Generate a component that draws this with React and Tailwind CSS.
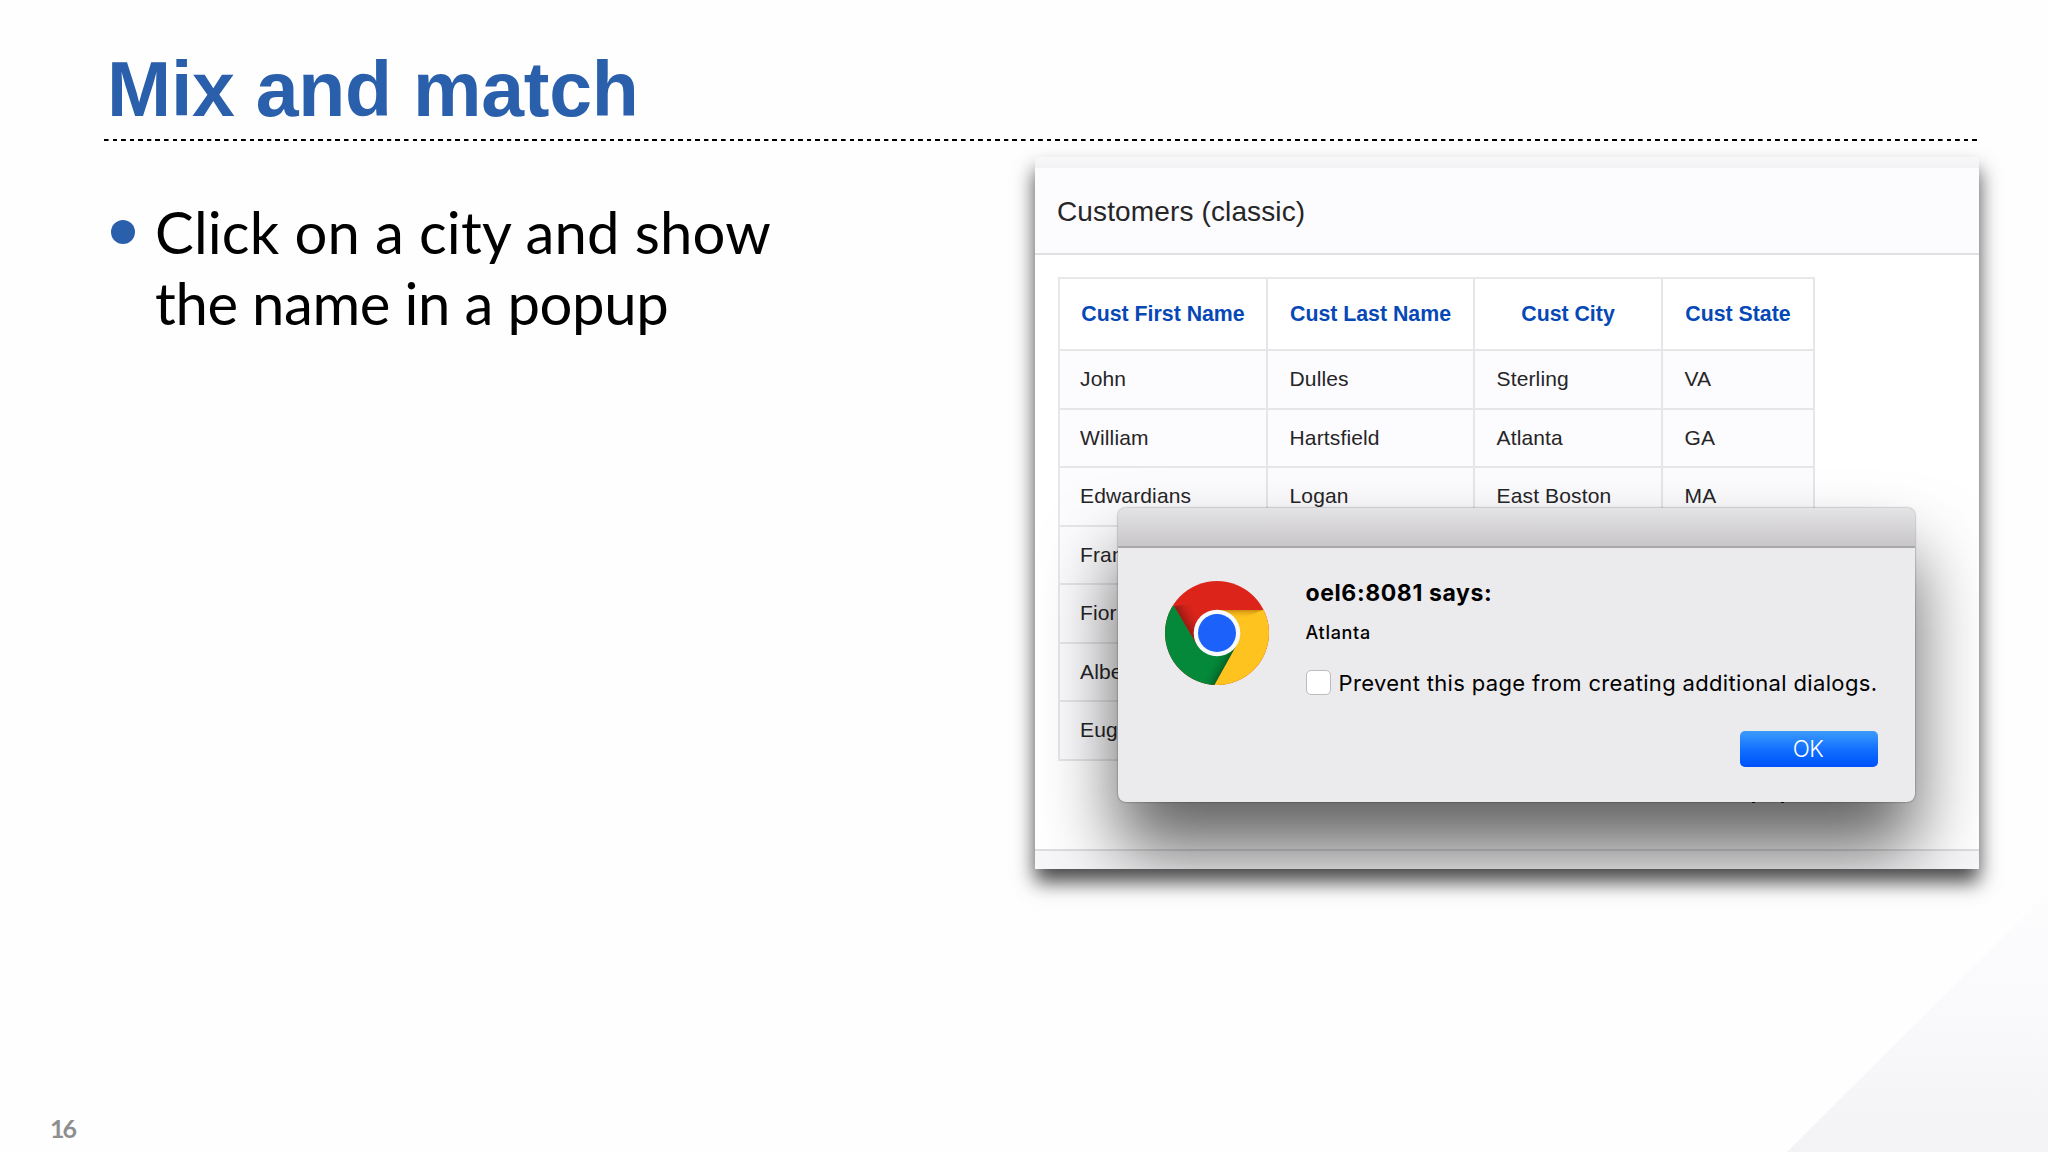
const customers = [
  { first: 'John', last: 'Dulles', city: 'Sterling', state: 'VA' },
  { first: 'William', last: 'Hartsfield', city: 'Atlanta', state: 'GA' },
  { first: 'Edwardians', last: 'Logan', city: 'East Boston', state: 'MA' },
  { first: 'Fran', last: '', city: '', state: '' },
  { first: 'Fior', last: '', city: '', state: '' },
  { first: 'Albe', last: '', city: '', state: '' },
  { first: 'Eug', last: '', city: '', state: '' },
];

const columns = [
  { key: 'first', label: 'Cust First Name' },
  { key: 'last', label: 'Cust Last Name' },
  { key: 'city', label: 'Cust City' },
  { key: 'state', label: 'Cust State' },
];

function ChromeLogo() {
  return (
    <svg viewBox="-52 -52 104 104" className="w-[104px] h-[104px] shrink-0">
      <defs>
        <clipPath id="disc">
          <circle r="52" />
        </clipPath>
        <linearGradient id="redShade" gradientUnits="userSpaceOnUse" x1="-32" y1="-8" x2="-16" y2="-17">
          <stop offset="0" stopColor="#7e170f" stopOpacity="0.75" />
          <stop offset="1" stopColor="#dc241b" stopOpacity="0" />
        </linearGradient>
        <linearGradient id="yellowShade" x1="0" y1="0" x2="0" y2="1">
          <stop offset="0" stopColor="#b5780b" stopOpacity="0.7" />
          <stop offset="1" stopColor="#ffc31f" stopOpacity="0" />
        </linearGradient>
        <linearGradient id="greenShade" gradientUnits="userSpaceOnUse" x1="9" y1="33" x2="-4" y2="26">
          <stop offset="0" stopColor="#04501f" stopOpacity="0.75" />
          <stop offset="1" stopColor="#04883a" stopOpacity="0" />
        </linearGradient>
      </defs>
      <g clipPath="url(#disc)">
        <rect x="-52" y="-52" width="104" height="104" fill="#dc241b" />
        <path d="M-43 -27 L-20 12 L0 0 L-10 -30Z" fill="url(#redShade)" />
        <path d="M-43 -27 L-20 12 L0 23 L20 11.500 L-2.500 52 L-60 60 V-27Z" fill="#04883a" />
        <path d="M20 11.500 L-2.500 52 L-24 52 L0 20Z" fill="url(#greenShade)" />
        <path d="M0 -23 H52 V60 H-7 L20 11.500Z" fill="#ffc31f" />
        <path d="M0 -23 H46 L24 -14 L0 -14Z" fill="url(#yellowShade)" />
      </g>
      <circle r="23.300" fill="#f7f9fb" />
      <circle r="19" fill="#1c62fa" />
    </svg>
  );
}

function CustomerTable() {
  return (
    <div className="mt-[22px] ml-[23px] w-[757px] border-t-2 border-l-2 border-[#e8e7ea] text-[21px] tracking-[0.150px] text-[#262527]">
      <div className="grid grid-cols-[208px_207px_188px_152px] h-[72px]">
        {columns.map((col) => (
          <div
            key={col.key}
            className="flex items-center justify-center border-r-2 border-b-2 border-[#e6e5e8] pt-px text-[21.300px] tracking-normal font-bold text-[#0648b5]">
            {col.label}
          </div>
        ))}
      </div>
      {customers.map((row) => (
        <div
          key={row.first}
          className="grid grid-cols-[208px_207px_188px_152px] h-[58.500px] bg-[#fcfbfd]">
          {columns.map((col) => (
            <div
              key={col.key}
              className="flex items-center border-r-2 border-b-2 border-[#e6e5e8] pb-px pl-5 not-first:pl-[21.500px]">
              {row[col.key]}
            </div>
          ))}
        </div>
      ))}
    </div>
  );
}

function AlertDialog() {
  return (
    <div className="absolute left-[82.500px] top-[351px] w-[797px] h-[294px] rounded-[8px] bg-[#ebeaec] shadow-[0_48px_72px_rgba(0,0,0,0.62),0_0_2px_rgba(0,0,0,0.55)] font-[Inter,sans-serif] text-black">
      <div className="h-[40px] rounded-t-[8px] border-b-2 border-[#aaa8ab] bg-gradient-to-b from-[#e4e3e5] to-[#c8c6c9]" />
      <div className="flex pl-[47px] pt-[33px]">
        <ChromeLogo />
        <div className="ml-[37px] w-[572px]">
          <div className="-mt-[2px] text-[23px] leading-7 font-bold tracking-[0.600px] whitespace-nowrap">
            oel6:8081 says:
          </div>
          <div className="mt-[14px] text-[18px] leading-6 font-medium tracking-[0.700px]">Atlanta</div>
          <div className="mt-[25px] flex items-center gap-[8px]">
            <span className="w-[25px] h-[25px] shrink-0 rounded-[5px] border border-[#bcbbbe] bg-white" />
            <span className="text-[22px] leading-6 tracking-[0.340px] whitespace-nowrap">
              Prevent this page from creating additional dialogs.
            </span>
          </div>
          <button className="mt-[36px] ml-[434.500px] block w-[138px] h-[36px] rounded-[5px] bg-gradient-to-b from-[#3d9bfb] via-[#1470ff] to-[#0050fb] pr-[2px] text-[22.500px] leading-9 font-light tracking-[-0.500px] text-white">
            OK
          </button>
        </div>
      </div>
    </div>
  );
}

function CustomersRegion() {
  return (
    <section className="w-[944px] h-[712px] shadow-[0_13px_19px_rgba(0,0,0,0.72)]">
      <div className="relative h-full overflow-hidden bg-white">
        <div className="h-[11px] bg-gradient-to-b from-[#f8f7f9] to-[#f2f1f3]" />
        <div className="flex h-[87px] items-center border-b-2 border-[#e0dfe2] bg-[#fcfbfd] pt-[2px] pl-[22px] text-[28px] tracking-[0.130px] text-[#262527]">
          Customers (classic)
        </div>
        <CustomerTable />
        <div className="mt-[40.500px] mr-[195px] flex justify-end gap-[26px]">
          <span className="w-[3px] h-[2px] bg-[#1d1c1e]" />
          <span className="w-[3px] h-[2px] bg-[#1d1c1e]" />
        </div>
        <div className="mt-[46px] h-[20px] border-t-2 border-[#dddcdf] bg-[#f7f6f8]" />
        <AlertDialog />
      </div>
    </section>
  );
}

export default function App() {
  return (
    <div className="relative w-[2048px] h-[1152px] overflow-hidden bg-[#fefefe] font-['Liberation_Sans',Arial,sans-serif]">
      {/* Folded corner */}
      <div className="absolute right-0 bottom-0 w-[261px] h-[260px] bg-gradient-to-b from-[#fdfdfe] via-[#f9f8fb] to-[#f3f2f5] [clip-path:polygon(100%_0,100%_100%,0_100%)]" />

      <div className="relative flex h-full flex-col">
        <header className="ml-[104px] h-[142px] w-[1874px] pt-[45px]">
          <h1 className="h-[94px] pl-[3px] text-[77px] leading-[88px] font-bold tracking-[-0.250px] whitespace-nowrap text-[#2a60ab]">
            Mix and match
          </h1>
          <div className="h-[2px] bg-[repeating-linear-gradient(90deg,#000_0_4.300px,transparent_4.800px_8.570px)]" />
        </header>

        <main className="flex flex-1 items-start justify-between pt-[15px] pr-[69px] pl-[111px]">
          <ul className="pt-[39px] font-[Lato,sans-serif]">
            <li className="flex">
              <span className="mt-[24px] mr-[20px] h-6 w-6 rounded-full bg-[#2a60ab]" />
              <p className="text-[58px] leading-[71px] whitespace-nowrap text-black">
                <span className="block tracking-[0.170px]">Click on a city and show</span>
                <span className="block tracking-[-0.380px]">the name in a popup</span>
              </p>
            </li>
          </ul>
          <CustomersRegion />
        </main>

        <footer className="h-[40px] pl-[50px] font-[Lato,sans-serif] text-[25px] leading-8 font-bold tracking-[-2px] text-[#8e8e8e]">
          16
        </footer>
      </div>
    </div>
  );
}
